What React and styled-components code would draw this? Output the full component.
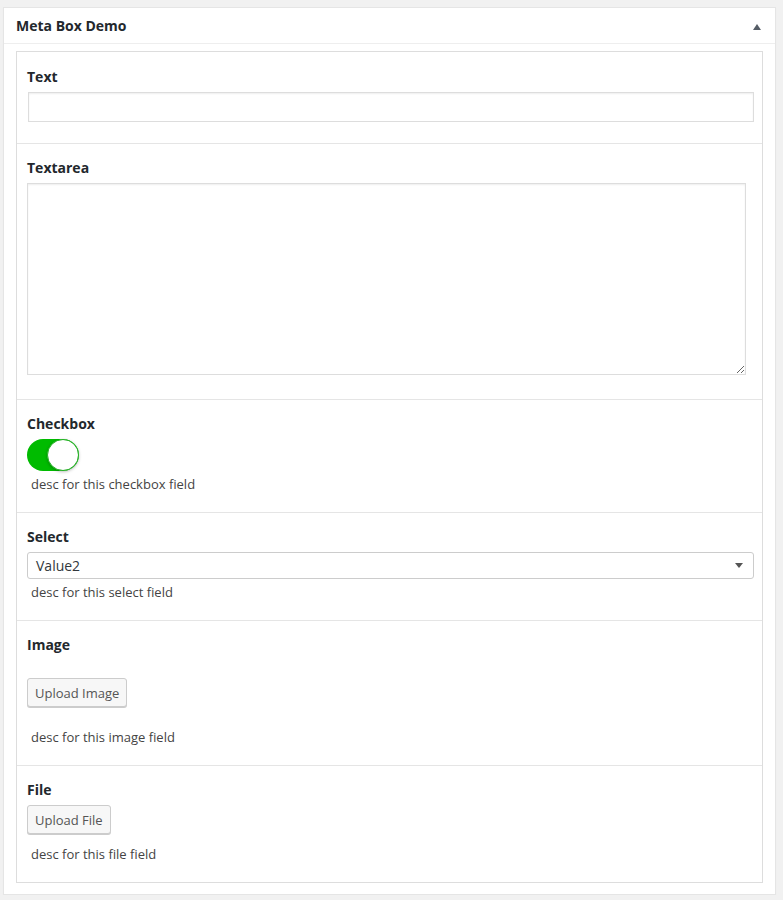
import React from 'react'
import styled, { createGlobalStyle } from 'styled-components'

const GlobalStyle = createGlobalStyle`
  html, body {
    margin: 0;
    background: #f1f1f1;
  }
  body {
    padding: 7px 7px 0 3px;
    font-family: "Open Sans", "Noto Sans", sans-serif;
    color: #444;
  }
`

const Postbox = styled.div`
  background: #fff;
  border: 1px solid #e5e5e5;
  box-shadow: 0 1px 1px rgba(0, 0, 0, 0.04);
`

const Header = styled.div`
  display: flex;
  align-items: center;
  justify-content: space-between;
  height: 35px;
  padding: 0 14px 0 12px;
  border-bottom: 1px solid #eee;
`

const Title = styled.h2`
  margin: 0;
  font-size: 14px;
  font-weight: 700;
  color: #23282d;
`

const Toggle = styled.span`
  width: 0;
  height: 0;
  border-left: 4px solid transparent;
  border-right: 4px solid transparent;
  border-bottom: 6px solid #555d66;
  margin-top: 3px;
`

const Inside = styled.div`
  padding: 7px 12px 11px 12px;
`

const Fields = styled.div`
  border: 1px solid #ddd;
`

const Field = styled.div`
  padding: ${p => p.top || 14}px 9px ${p => p.bottom || 19}px 10px;
  border-bottom: ${p => (p.last ? 'none' : '1px solid #e5e5e5')};
`

const Label = styled.div`
  font-size: 14px;
  font-weight: 700;
  line-height: 20px;
  color: #23282d;
  margin-bottom: ${p => p.gap || 5}px;
`

const TextInput = styled.input`
  display: block;
  box-sizing: border-box;
  width: 726px;
  height: 30px;
  margin: 0 0 0 1px;
  border: 1px solid #ddd;
  box-shadow: inset 0 1px 2px rgba(0, 0, 0, 0.07);
  background: #fff;
  outline: none;
`

const TextArea = styled.textarea`
  display: block;
  box-sizing: border-box;
  width: 719px;
  height: 192px;
  margin: 0;
  border: 1px solid #ddd;
  box-shadow: inset 0 1px 2px rgba(0, 0, 0, 0.07);
  background: #fff;
  outline: none;
`

const Switch = styled.div`
  position: relative;
  width: 52px;
  height: 32px;
  border-radius: 16px;
  background: #00bb00;
`

const Knob = styled.span`
  position: absolute;
  top: 0;
  right: 0;
  box-sizing: border-box;
  width: 32px;
  height: 32px;
  border-radius: 50%;
  background: #fff;
  border: 1px solid #22b022;
  box-shadow: 0 1px 3px rgba(0, 0, 0, 0.25);
`

const Desc = styled.p`
  margin: ${p => p.top || 4}px 0 0;
  padding-left: 4px;
  font-size: 13px;
  line-height: 18px;
  color: #444;
`

const Select = styled.div`
  display: flex;
  align-items: center;
  justify-content: space-between;
  box-sizing: border-box;
  width: 727px;
  height: 27px;
  padding: 0 10px 0 8px;
  border: 1px solid #ccc;
  border-radius: 3px;
  background: #fff;
  font-size: 14px;
  color: #32373c;
`

const Caret = styled.span`
  width: 0;
  height: 0;
  border-left: 4px solid transparent;
  border-right: 4px solid transparent;
  border-top: 5px solid #555;
`

const Button = styled.button`
  display: block;
  box-sizing: border-box;
  height: 29px;
  margin: 0;
  padding: 0 7px;
  border: 1px solid #ccc;
  border-radius: 3px;
  background: #f7f7f7;
  box-shadow: 0 1px 0 #ccc;
  font-family: "Open Sans", "Noto Sans", sans-serif;
  font-size: 13px;
  color: #555;
`

export default function App() {
  return (
    <>
      <GlobalStyle />
      <Postbox>
        <Header>
          <Title>Meta Box Demo</Title>
          <Toggle />
        </Header>
        <Inside>
          <Fields>
            <Field top={15} bottom={21}>
              <Label>Text</Label>
              <TextInput type="text" />
            </Field>
            <Field bottom={24}>
              <Label>Textarea</Label>
              <TextArea />
            </Field>
            <Field>
              <Label>Checkbox</Label>
              <Switch>
                <Knob />
              </Switch>
              <Desc>desc for this checkbox field</Desc>
            </Field>
            <Field>
              <Label>Select</Label>
              <Select>
                <span>Value2</span>
                <Caret />
              </Select>
              <Desc>desc for this select field</Desc>
            </Field>
            <Field>
              <Label gap={23}>Image</Label>
              <Button>Upload Image</Button>
              <Desc top={21}>desc for this image field</Desc>
            </Field>
            <Field last>
              <Label>File</Label>
              <Button>Upload File</Button>
              <Desc top={11}>desc for this file field</Desc>
            </Field>
          </Fields>
        </Inside>
      </Postbox>
    </>
  )
}
